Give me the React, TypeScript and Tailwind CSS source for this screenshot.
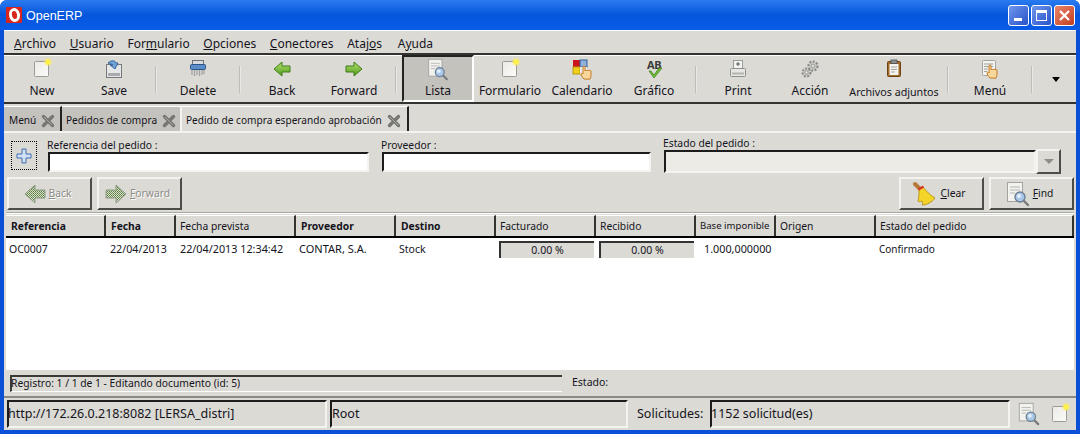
import type { ReactNode } from 'react';

const NewPage = ({ size = 24 }: { size?: number }) => (
  <svg width={size} height={size} viewBox="0 0 24 24">
    <defs>
      <radialGradient id="glow">
        <stop offset="0.4" stopColor="#fff04a" />
        <stop offset="1" stopColor="#fff04a" stopOpacity="0" />
      </radialGradient>
      <linearGradient id="pageFill" x1="0" y1="0" x2="1" y2="1">
        <stop offset="0" stopColor="#ecebe7" />
        <stop offset="1" stopColor="#fafaf8" />
      </linearGradient>
    </defs>
    <rect x="4.500" y="4.500" width="14" height="15" rx="1" fill="url(#pageFill)" stroke="#9a9a96" />
    <circle cx="18" cy="5" r="4.500" fill="url(#glow)" />
  </svg>
);

const SaveIcon = () => (
  <svg width="24" height="24" viewBox="0 0 24 24">
    <rect x="4.500" y="7.500" width="15" height="13" fill="#e4e6e8" stroke="#77797c" />
    <rect x="6" y="16" width="12" height="3" fill="#a9abad" />
    <path d="M6 6c3-3 7-3 8 0h2l-3 6-5-4h3c-1-1-3-1-5-2z" fill="#6fa3d6" stroke="#2b5f95" strokeWidth="0.9" />
  </svg>
);

const DeleteIcon = () => (
  <svg width="24" height="24" viewBox="0 0 24 24">
    <rect x="6.500" y="3.500" width="11" height="4" fill="#d9dbdd" stroke="#6d7378" />
    <rect x="4.500" y="7.500" width="15" height="5" rx="1" fill="#5a8ec9" stroke="#2d5688" />
    <path d="M6 13v5M8.500 13v6M11 13v5M13.500 13v6M16 13v5M18 13v4" stroke="#a2a4a6" strokeWidth="1.300" />
  </svg>
);

const Arrow = ({ flip }: { flip?: boolean }) => (
  <svg width="24" height="24" viewBox="0 0 24 24" style={{ transform: flip ? 'scaleX(-1)' : undefined }}>
    <defs>
      <linearGradient id="arrowGreen" x1="0" y1="0" x2="0" y2="1">
        <stop offset="0" stopColor="#b4e06a" />
        <stop offset="1" stopColor="#4f9a1e" />
      </linearGradient>
    </defs>
    <path d="M4 12l8-7v4h8v6h-8v4z" fill="url(#arrowGreen)" stroke="#3f7f1a" strokeLinejoin="round" />
  </svg>
);

const DitherArrow = ({ flip }: { flip?: boolean }) => (
  <svg width="24" height="22" viewBox="0 0 24 22" style={{ transform: flip ? 'scaleX(-1)' : undefined }}>
    <defs>
      <pattern id="dither" width="2" height="2" patternUnits="userSpaceOnUse">
        <rect width="2" height="2" fill="#dcdad5" />
        <rect width="1" height="1" fill="#55803a" />
        <rect x="1" y="1" width="1" height="1" fill="#6f9a50" />
      </pattern>
    </defs>
    <path d="M2 11l10-9v5h10v8H12v5z" fill="url(#dither)" stroke="#8d9a84" />
  </svg>
);

const Magnifier = ({ cx = 16, cy = 16 }: { cx?: number; cy?: number }) => (
  <>
    <path d={`M${cx + 4} ${cy + 4}l4 4`} stroke="#77797c" strokeWidth="2.400" strokeLinecap="round" />
    <circle cx={cx} cy={cy} r="5" fill="#a9c8e8" stroke="#6d7f92" strokeWidth="1.400" />
    <circle cx={cx - 1} cy={cy - 1} r="2" fill="#e3eef9" />
  </>
);

const FindPage = ({ size = 24 }: { size?: number }) => (
  <svg width={size} height={size} viewBox="0 0 26 26">
    <rect x="2.500" y="1.500" width="15" height="19" fill="#f2f2ef" stroke="#a3a3a0" />
    <path d="M5 6h10M5 9h10M5 12h5" stroke="#b5b5b2" />
    <Magnifier cx={15} cy={16} />
  </svg>
);

const Hand = () => (
  <path
    d="M11 21c-2-2-3-4-3-5s1-1 2 0v-7c0-1.500 2-1.500 2 0v4c0-1 2-1 2 0 0-1 2-1 2 0 0-.8 2-.8 2 .2v4c0 2-1 4-1 4z"
    fill="#f8d79c"
    stroke="#c77a25"
  />
);

const CalendarIcon = () => (
  <svg width="24" height="24" viewBox="0 0 24 24">
    <rect x="3" y="3" width="7" height="7" fill="#c9151b" />
    <rect x="10" y="3" width="7" height="7" fill="#8fb2dd" stroke="#2e5d9c" />
    <rect x="3" y="10" width="7" height="7" fill="#f2cf1c" stroke="#b79a12" />
    <rect x="10" y="10" width="7" height="7" fill="#e9e9e9" />
    <g transform="translate(3 1)"><Hand /></g>
  </svg>
);

const ChartIcon = () => (
  <span className="relative block w-6 h-6 pt-[2px]">
    <span className="block text-center text-[11px] leading-[12px] font-bold text-[#3a3a3a] tracking-[-0.5px]">AB</span>
    <svg className="absolute left-0 top-0" width="24" height="24" viewBox="0 0 24 24">
      <path d="M7 14l2 0 3 4 5-7h3l-8 10z" fill="#6fbb35" stroke="#3e7f1a" strokeWidth="0.700" />
    </svg>
  </span>
);

const PrintIcon = () => (
  <svg width="24" height="24" viewBox="0 0 24 24">
    <rect x="7.500" y="3.500" width="9" height="8" fill="#f4f4f2" stroke="#9a9a97" />
    <path d="M12 5v4M10 7h4" stroke="#55585a" />
    <rect x="4.500" y="11.500" width="15" height="8" rx="1" fill="#e6e6e3" stroke="#8f8f8c" />
    <rect x="6" y="15.500" width="12" height="2" fill="#b3b3b0" />
  </svg>
);

const Gear = ({ x, y, r }: { x: number; y: number; r: number }) => (
  <g>
    <circle cx={x} cy={y} r={r} fill="#cfcfcc" stroke="#8a8a88" strokeWidth={r * 0.5} strokeDasharray="2 1.400" />
    <circle cx={x} cy={y} r={r * 0.45} fill="#dcdad5" stroke="#8a8a88" strokeWidth="0.800" />
  </g>
);

const GearsIcon = () => (
  <svg width="24" height="24" viewBox="0 0 24 24">
    <Gear x={15} y={9} r={4.500} />
    <Gear x={8.500} y={15.500} r={4} />
  </svg>
);

const ClipIcon = () => (
  <svg width="24" height="24" viewBox="0 0 24 24">
    <rect x="5.500" y="4.500" width="13" height="15" rx="1" fill="#a36a28" stroke="#6b4315" />
    <rect x="7.500" y="7" width="9" height="11" fill="#f3f3f0" />
    <path d="M9 10h6M9 12.500h6M9 15h4" stroke="#a5a5a2" />
    <rect x="9" y="3" width="6" height="3.500" fill="#8b8f93" stroke="#4d5053" strokeWidth="0.800" />
  </svg>
);

const ListHand = () => (
  <svg width="24" height="24" viewBox="0 0 24 24">
    <rect x="4.500" y="3.500" width="13" height="15" rx="1" fill="#f3f3f0" stroke="#a3a3a0" />
    <path d="M6 7h9M6 9.500h9M6 12h4M6 14.500h3" stroke="#9c9c99" />
    <g transform="translate(1 0)"><Hand /></g>
  </svg>
);

const Broom = () => (
  <svg width="26" height="26" viewBox="0 0 26 26">
    <path d="M3 3l6 6" stroke="#b77a3a" strokeWidth="4" strokeLinecap="round" />
    <path d="M7 8l4-2c3 4 7 8 12 11-3 4-8 7-13 7 1-2 1-3 0-4-2 1-3 1-4 0 1-3 1-8 1-12z" fill="#f3d427" stroke="#b8971a" />
    <path d="M6.500 8.500l5-3" stroke="#d8342a" strokeWidth="2.400" />
  </svg>
);

const TabClose = () => (
  <svg className="shrink-0" width="14" height="14" viewBox="0 0 14 14">
    <path d="M2.500 2.500l9 9M11.500 2.500l-9 9" stroke="#767673" strokeWidth="3.400" strokeLinecap="round" />
    <path d="M3 3l8 8" stroke="#a8a8a4" strokeWidth="1" />
  </svg>
);

type Tool = { label: string; icon: ReactNode; w?: string; active?: boolean; small?: boolean } | 'sep';

const TOOLS: Tool[] = [
  { label: 'New', icon: <NewPage /> },
  { label: 'Save', icon: <SaveIcon /> },
  'sep',
  { label: 'Delete', icon: <DeleteIcon /> },
  'sep',
  { label: 'Back', icon: <Arrow /> },
  { label: 'Forward', icon: <Arrow flip /> },
  'sep',
  { label: 'Lista', icon: <FindPage />, active: true },
  { label: 'Formulario', icon: <NewPage /> },
  { label: 'Calendario', icon: <CalendarIcon /> },
  { label: 'Gráfico', icon: <ChartIcon /> },
  'sep',
  { label: 'Print', icon: <PrintIcon /> },
  { label: 'Acción', icon: <GearsIcon /> },
  { label: 'Archivos adjuntos', icon: <ClipIcon />, w: 'w-[96px]', small: true },
  'sep',
  { label: 'Menú', icon: <ListHand /> },
  'sep',
];

const MENU: [string, string, string][] = [
  ['', 'A', 'rchivo'],
  ['', 'U', 'suario'],
  ['For', 'm', 'ulario'],
  ['', 'O', 'pciones'],
  ['', 'C', 'onectores'],
  ['Ataj', 'o', 's'],
  ['A', 'y', 'uda'],
];

const COLS = [
  { label: 'Referencia', w: 'w-[100px]', bold: true },
  { label: 'Fecha', w: 'w-[70px]', bold: true },
  { label: 'Fecha prevista', w: 'w-[120px]' },
  { label: 'Proveedor', w: 'w-[100px]', bold: true },
  { label: 'Destino', w: 'w-[100px]', bold: true },
  { label: 'Facturado', w: 'w-[100px]' },
  { label: 'Recibido', w: 'w-[100px]' },
  { label: 'Base imponible', w: 'w-[80px]', tight: true },
  { label: 'Origen', w: 'w-[100px]' },
  { label: 'Estado del pedido', w: 'flex-1' },
];

const inset = 'border-t-2 border-l-2 border-t-[#1c1c1c] border-l-[#1c1c1c] border-r-2 border-b-2 border-r-[#f4f3f0] border-b-[#f4f3f0]';
const raised = 'border-t-2 border-l-2 border-t-[#f4f3f0] border-l-[#f4f3f0] border-r-2 border-b-2 border-r-[#4c4c48] border-b-[#4c4c48]';

function FormButton({ icon, first, rest, disabled }: { icon: ReactNode; first: string; rest: string; disabled?: boolean }) {
  return (
    <div className={`w-[85px] h-[33px] flex items-center justify-center gap-[2px] pr-[5px] ${raised}`}>
      {icon}
      <span className={disabled ? 'text-[#8d8d88] [text-shadow:1px_1px_0_#fff]' : ''}>
        <u>{first}</u>{rest}
      </span>
    </div>
  );
}

function Progress() {
  return (
    <div className="w-[95px] h-[17px] ml-[3px] mr-[2px] flex items-center justify-center bg-[#dcdad5] border-t-2 border-l-2 border-t-[#333] border-l-[#333]">
      0.00 %
    </div>
  );
}

export default function App() {
  return (
    <div className="w-[1080px] h-[434px] overflow-hidden flex flex-col rounded-t-[7px] bg-[#0a4fd8] font-['Noto_Sans',sans-serif] text-[10.300px] text-[#14141c]">
      {/* Title bar */}
      <div className="h-[30px] shrink-0 flex items-center pl-[6px] pr-[5px] bg-gradient-to-b from-[#2a7bf0] via-[#0555dc] to-[#0a5ce8]">
        <div className="w-4 h-4 bg-[#d8261c] flex items-center justify-center rounded-[1px]">
          <div className="w-[11px] h-[14px] rounded-[50%] border-[3px] border-white -rotate-12" />
        </div>
        <span className="ml-[4px] pt-[2px] text-white text-[12.500px] font-['Liberation_Sans',sans-serif]">OpenERP</span>
        <div className="ml-auto flex gap-[2px]">
          <div className="w-[21px] h-[21px] rounded-[3px] border border-white bg-gradient-to-br from-[#6f96ee] to-[#2a52c8] flex items-end pl-[5px] pb-[4px]">
            <div className="w-[8px] h-[3px] bg-white" />
          </div>
          <div className="w-[21px] h-[21px] rounded-[3px] border border-white bg-gradient-to-br from-[#6f96ee] to-[#2a52c8] flex items-center justify-center">
            <div className="w-[11px] h-[11px] border border-white border-t-[3px]" />
          </div>
          <div className="w-[21px] h-[21px] rounded-[3px] border border-white bg-gradient-to-br from-[#e9846a] to-[#c23c1c] flex items-center justify-center">
            <svg width="13" height="13" viewBox="0 0 13 13">
              <path d="M2 2l9 9M11 2l-9 9" stroke="#fff" strokeWidth="2.200" />
            </svg>
          </div>
        </div>
      </div>

      <div className="flex-1 mx-[4px] mb-[4px] min-h-0 flex flex-col bg-[#dcdad5] border-t border-t-white">
        {/* Menu */}
        <div className="h-[24px] shrink-0 flex items-center pl-[10px] pt-[3px] gap-[13.700px] text-[12px] border-b-2 border-b-[#33332f]">
          {MENU.map(([a, b, c]) => (
            <span key={a + b + c} className="last:ml-[2px]">{a}<u>{b}</u>{c}</span>
          ))}
        </div>

        {/* Toolbar */}
        <div className="h-[49px] shrink-0 flex items-stretch pl-[2px] border-t border-t-white border-b-2 border-b-[#33332f] text-[12px]">
          {TOOLS.map((t, i) =>
            t === 'sep' ? (
              <div key={i} className="w-[12px] flex items-center justify-center">
                <div className="w-[2px] h-[27px] bg-gradient-to-r from-[#a9a7a2] to-white" />
              </div>
            ) : (
              <div
                key={t.label}
                className={`${t.w ?? 'w-[72px]'} flex flex-col items-center pt-[1px] ${t.active ? 'bg-[#c4c2bd] border-2 border-t-[#222] border-l-[#222] border-r-white border-b-white -mt-px pt-0' : ''}`}
              >
                {t.icon}
                <span className={`whitespace-nowrap ${t.small ? 'text-[10.700px] mt-[3px]' : 'mt-[1px]'}`}>{t.label}</span>
              </div>
            ),
          )}
          <div className="flex-1 flex items-center justify-center pr-[2px]">
            <div className="w-0 h-0 border-x-[4px] border-x-transparent border-t-[5px] border-t-black" />
          </div>
        </div>

        {/* Tabs */}
        <div className="h-[27px] mt-[2px] shrink-0 flex items-stretch border-b-2 border-b-[#f4f3f0] text-[10.100px]">
          <div className="w-[58px] pl-[5px] pt-[3px] flex items-center gap-[5px] bg-[#c4c2bd] border-t border-t-white border-r-2 border-r-[#222] whitespace-nowrap">
            Menú <TabClose />
          </div>
          <div className="w-[120px] pl-[4px] pt-[3px] flex items-center gap-[5px] bg-[#c4c2bd] border-t border-t-white border-r-2 border-r-[#f4f3f0] whitespace-nowrap">
            Pedidos de compra <TabClose />
          </div>
          <div className="w-[227px] pl-[4px] pt-[3px] flex items-center gap-[5px] border-t border-t-white border-r-2 border-r-[#222] whitespace-nowrap">
            Pedido de compra esperando aprobación <TabClose />
          </div>
        </div>

        {/* Search form */}
        <div className="h-[44px] shrink-0 flex items-start pl-[7px]">
          <div className="w-[26px] h-[29px] mt-[8px] border border-dotted border-black flex items-center justify-center">
            <svg width="16" height="16" viewBox="0 0 16 16">
              <path d="M6 1h4v5h5v4h-5v5H6v-5H1V6h5z" fill="#cfe0f3" stroke="#3e6fb0" />
            </svg>
          </div>
          <div className="ml-[11px] w-[321px] pt-[5px]">
            <div className="h-[14px] -ml-px leading-[14px]">Referencia del pedido :</div>
            <div className={`h-[20px] bg-white ${inset}`} />
          </div>
          <div className="ml-[13px] w-[269px] pt-[5px]">
            <div className="h-[14px] -ml-px leading-[14px]">Proveedor :</div>
            <div className={`h-[20px] bg-white ${inset}`} />
          </div>
          <div className="ml-[13px] pt-[3px]">
            <div className="h-[14px] -ml-px leading-[14px]">Estado del pedido :</div>
            <div className="flex items-start">
              <div className={`w-[372px] h-[23px] bg-[#edebe6] ${inset}`} />
              <div className={`w-[25px] h-[25px] -mt-[1px] flex items-center justify-center ${raised}`}>
                <div className="w-0 h-0 border-x-[5px] border-x-transparent border-t-[5px] border-t-[#8d8d88]" />
              </div>
            </div>
          </div>
        </div>

        {/* Search buttons */}
        <div className="h-[33px] shrink-0 flex pl-[3px] pr-[2px] gap-[5px]">
          <FormButton icon={<DitherArrow />} first="B" rest="ack" disabled />
          <FormButton icon={<DitherArrow flip />} first="F" rest="orward" disabled />
          <div className="flex-1" />
          <FormButton icon={<Broom />} first="C" rest="lear" />
          <FormButton icon={<FindPage size={26} />} first="F" rest="ind" />
        </div>

        <div className="h-[2px] mt-[2px] mx-[2px] shrink-0 bg-[#a9a7a2] border-b border-b-white" />

        {/* Table */}
        <div className="flex-1 min-h-0 flex flex-col ml-[2px] mr-[2px] mt-[1px] bg-white">
          <div className="h-[23px] shrink-0 flex bg-[#dcdad5] border-b-2 border-b-black">
            {COLS.map((c) => (
              <div
                key={c.label}
                className={`${c.w} ${c.bold ? 'pl-[5px] font-bold' : 'pl-[4px]'} ${c.tight ? 'text-[9.600px]' : ''} pt-[1px] flex items-center whitespace-nowrap overflow-hidden border-r-2 border-r-[#33332f] border-t border-t-white`}
              >
                {c.label}
              </div>
            ))}
          </div>
          <div className="h-[23px] flex items-center text-[10.500px]">
            <span className="w-[100px] pl-[3px]">OC0007</span>
            <span className="w-[70px] pl-[4px] text-[10.700px]">22/04/2013</span>
            <span className="w-[120px] pl-[4px] text-[10.800px]">22/04/2013 12:34:42</span>
            <span className="w-[100px] pl-[3px] text-[11px]">CONTAR, S.A.</span>
            <span className="w-[100px] pl-[3px]">Stock</span>
            <span className="w-[100px]"><Progress /></span>
            <span className="w-[100px]"><Progress /></span>
            <span className="w-[80px] pl-[8px] text-[10.800px]">1.000,000000</span>
            <span className="w-[100px]" />
            <span className="pl-[3px] text-[10px]">Confirmado</span>
          </div>
        </div>

        {/* Record status */}
        <div className="h-[28px] shrink-0 flex items-center pl-[6px] border-b-2 border-b-[#8a8984]">
          <div className="w-[552px] h-[17px] indent-[-1px] pt-[1px] flex items-center border-t-2 border-l-2 border-t-[#3a3a36] border-l-[#3a3a36] border-b border-b-white">
            <span>Registro: 1 / 1 de 1 - Editando documento (id: 5)</span>
          </div>
          <span className="ml-[10px] text-[10.500px]">Estado:</span>
        </div>

        {/* Status bar */}
        <div className="h-[32px] shrink-0 flex items-center pl-[3px] text-[12.500px]">
          <div className={`w-[320px] h-[28px] flex items-center whitespace-nowrap ${inset}`}><span className="-ml-px">http://172.26.0.218:8082 [LERSA_distri]</span></div>
          <div className={`w-[298px] h-[28px] ml-[3px] flex items-center ${inset}`}>Root</div>
          <span className="ml-[9px] w-[73px]">Solicitudes:</span>
          <div className={`w-[300px] h-[28px] flex items-center ${inset}`}><span className="-ml-px">1152 solicitud(es)</span></div>
          <div className="ml-[7px]"><FindPage size={24} /></div>
          <div className="ml-[7px]"><NewPage size={24} /></div>
        </div>
      </div>
    </div>
  );
}
